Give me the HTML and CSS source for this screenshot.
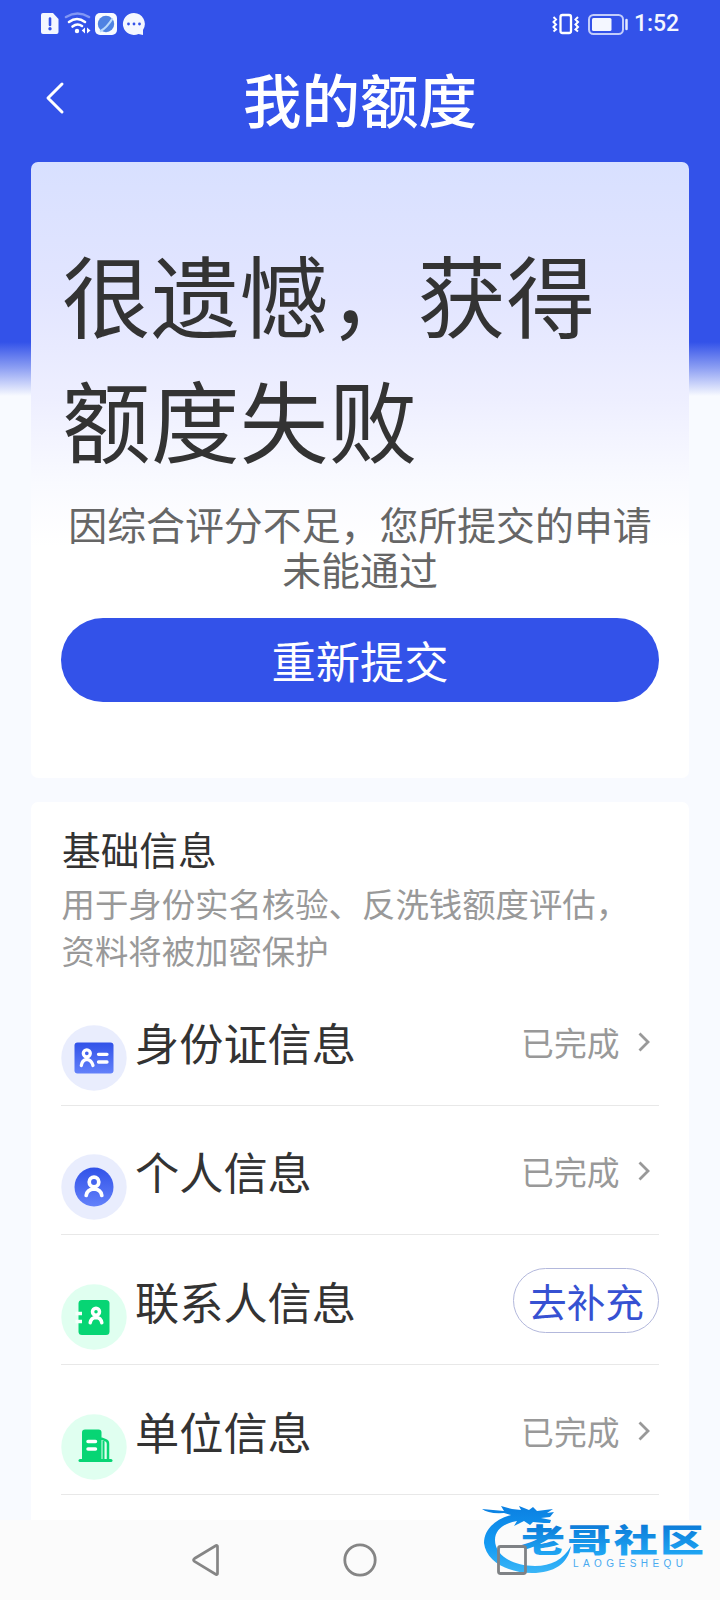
FILE: index.html
```html
<!DOCTYPE html>
<html lang="zh-CN">
<head>
<meta charset="utf-8">
<title>我的额度</title>
<link rel="stylesheet" href="styles.css">
</head>
<body>
<div class="screen">
  <div class="status">
    <svg class="status-left" width="110" height="26" viewBox="38 11 110 26">
      <path d="M44 13h9l5.500 6v13a2 2 0 0 1-2 2H43a2 2 0 0 1-2-2V15a2 2 0 0 1 2-2z" fill="#f4f7ff"/>
      <path d="M50 18.500v6.500" stroke="#3352e9" stroke-width="2.600" stroke-linecap="round"/>
      <circle cx="50" cy="28.800" r="1.700" fill="#3352e9"/>
      <path d="M66 17q11.500-7 23 0" fill="none" stroke="#8196f4" stroke-width="2.500" stroke-linecap="round"/>
      <path d="M69 22q8-6 16 0M72.500 26.500q4.800-3.800 9.500-.500" fill="none" stroke="#fff" stroke-width="2.600" stroke-linecap="round"/>
      <circle cx="77" cy="31" r="2.200" fill="#fff"/>
      <path d="M85 27.500v6l-3.300-3zM87 27.500v6l3.500-3z" fill="#fff"/>
      <rect x="95" y="13" width="22" height="22" rx="5" fill="#f8fbff"/>
      <circle cx="106" cy="24" r="8.200" fill="#4f83e2"/>
      <path d="M100 31.500q7-4 12.500-13" fill="none" stroke="#b8dafc" stroke-width="2.200"/>
      <path d="M134 13a11 11 0 1 0 4.500 21l4.500 1v-5A11 11 0 0 0 134 13z" fill="#f4f7ff"/>
      <circle cx="128.500" cy="24" r="1.400" fill="#3352e9"/><circle cx="134" cy="24" r="1.400" fill="#3352e9"/><circle cx="139.500" cy="24" r="1.400" fill="#3352e9"/>
    </svg>
    <svg class="status-right" width="78" height="26" viewBox="551 11 78 26">
      <rect x="560.500" y="15" width="10.500" height="18" rx="2" fill="none" stroke="#fff" stroke-width="2.300"/>
      <path d="M553.500 17l2.500 2.500-2.500 2.500 2.500 2.500-2.500 2.500 2.500 2.500-2.500 2M578 17l-2.500 2.500 2.500 2.500-2.500 2.500 2.500 2.500-2.500 2.500 2.500 2" fill="none" stroke="#fff" stroke-width="2"/>
      <rect x="589" y="15" width="34" height="19" rx="4.500" fill="none" stroke="#c3cdfb" stroke-width="2"/>
      <rect x="592" y="18" width="19.500" height="13" rx="1.500" fill="#f4f7ff"/>
      <path d="M626.500 20v9" stroke="#e4e9ff" stroke-width="2.500" stroke-linecap="round"/>
    </svg>
    <span class="clock">1:52</span>
  </div>
  <header class="titlebar">
    <svg class="back" width="20" height="34" viewBox="0 0 20 34"><path d="M17 3L3 17l14 14" fill="none" stroke="#fff" stroke-width="3" stroke-linecap="round" stroke-linejoin="round"/></svg>
    <h1 class="title">我的额度</h1>
  </header>

  <main class="content">
    <section class="card result">
      <h2 class="headline">很遗憾，获得<br>额度失败</h2>
      <p class="reason">因综合评分不足，您所提交的申请<br>未能通过</p>
      <button class="submit">重新提交</button>
    </section>

    <section class="card info">
      <h3 class="info-title">基础信息</h3>
      <p class="info-note">用于身份实名核验、反洗钱额度评估，<br>资料将被加密保护</p>
      <ul class="list">
        <li class="row">
          <svg class="icon" viewBox="0 0 66 66">
            <defs><linearGradient id="blue" x1="0" y1="0" x2="0" y2="1"><stop offset="0" stop-color="#3152e8"/><stop offset="1" stop-color="#6381fa"/></linearGradient></defs>
            <circle cx="33" cy="33" r="32.700" fill="#e9edfd"/>
            <rect x="13.500" y="17.500" width="39" height="31" rx="3" fill="url(#blue)"/>
            <g fill="none" stroke="#fff" stroke-width="3.300" stroke-linecap="round"><circle cx="25.800" cy="28.300" r="3.500"/><path d="M20.300 40.500Q21 35 25.800 34.300Q30.600 35 32 40.500M37.500 29.300h8.500M37.500 37h8.500"/></g>
          </svg>
          <span class="label">身份证信息</span><span class="state">已完成</span>
          <svg class="chev" viewBox="0 0 12 20"><path d="M1.500 1.500L10 10l-8.500 8.500" fill="none" stroke="#999" stroke-width="2.800"/></svg>
        </li>
        <li class="row">
          <svg class="icon" viewBox="0 0 66 66">
            <circle cx="33" cy="33" r="32.700" fill="#e9edfd"/><circle cx="33" cy="33" r="19.500" fill="url(#blue)"/>
            <g fill="none" stroke="#fff" stroke-width="3.700" stroke-linecap="round"><circle cx="33" cy="28" r="4.800"/><path d="M25.200 41.500Q26 35.300 33 34.800Q40 35.300 40.800 41.500"/></g>
          </svg>
          <span class="label">个人信息</span><span class="state">已完成</span>
          <svg class="chev" viewBox="0 0 12 20"><path d="M1.500 1.500L10 10l-8.500 8.500" fill="none" stroke="#999" stroke-width="2.800"/></svg>
        </li>
        <li class="row">
          <svg class="icon" viewBox="0 0 66 66">
            <circle cx="33" cy="33" r="32.700" fill="#e0fff0"/><rect x="17.500" y="16" width="31" height="35" rx="3.500" fill="#07d574"/>
            <g fill="none" stroke="#fff" stroke-width="3.500" stroke-linecap="round"><circle cx="35" cy="27.800" r="3.500"/><path d="M29.200 38.800Q30 33.600 35 33.400Q40 33.600 40.800 38.800"/></g>
            <path d="M14.500 29.500h6.500M14.500 37.500h6.500" stroke="#f5fffa" stroke-width="3.400"/>
          </svg>
          <span class="label">联系人信息</span><button class="fill">去补充</button>
        </li>
        <li class="row">
          <svg class="icon" viewBox="0 0 66 66">
            <circle cx="33" cy="33" r="32.700" fill="#e0fff0"/>
            <path d="M21 46V18.500a3 3 0 0 1 3-3h13.500a3 3 0 0 1 3 3v27.500z" fill="#07d574"/>
            <path d="M40 24.500l4.500 1.700q2.500 1 2.500 3.500v17" fill="none" stroke="#07d574" stroke-width="2.500"/>
            <path d="M42.500 27v19" stroke="#07d574" stroke-width="2"/>
            <path d="M19 46.500h31" stroke="#07d574" stroke-width="3" stroke-linecap="round"/>
            <path d="M27 27.500h7.500M27 35h7.500" stroke="#fff" stroke-width="3.500" stroke-linecap="round"/>
          </svg>
          <span class="label">单位信息</span><span class="state">已完成</span>
          <svg class="chev" viewBox="0 0 12 20"><path d="M1.500 1.500L10 10l-8.500 8.500" fill="none" stroke="#999" stroke-width="2.800"/></svg>
        </li>
      </ul>
    </section>
  </main>

  <nav class="navbar">
    <svg viewBox="0 0 32 36"><path d="M2.500 16.500L24 3.500q1.500-.500 1.500 1v27q0 1.500-1.500 1L2.500 19.500q-2-1.500 0-3z" fill="none" stroke="#858585" stroke-width="2.700"/></svg>
    <svg viewBox="0 0 32 36"><circle cx="16" cy="18" r="15.200" fill="none" stroke="#858585" stroke-width="2.800"/></svg>
    <svg viewBox="0 0 32 36"></svg>
  </nav>

  <svg class="watermark" width="240" height="80" viewBox="480 1500 240 80">
    <defs>
      <linearGradient id="ring" x1="0" y1="0" x2="0" y2="1"><stop offset="0" stop-color="#0b80e2"/><stop offset=".6" stop-color="#149bf3"/><stop offset="1" stop-color="#3ab6f7"/></linearGradient>
      <linearGradient id="word" x1="0" y1="0" x2="0" y2="1"><stop offset=".15" stop-color="#0a78d6"/><stop offset="1" stop-color="#24aff9"/></linearGradient>
    </defs>
    <path d="M511 1515C493 1520 484 1531 484 1543C486 1562 509 1573 532 1573C554 1573 568 1564 571 1546C563 1560 551 1566 535 1566C512 1566 495 1555 495 1540C495 1529 505 1523 517 1521L514 1526L524 1521L530 1525L533 1522L544 1523L550 1523L551 1520L541 1518L550 1517L554 1512L547 1513L553 1509L537 1511L533 1507L529 1510L519 1506L521 1510L512 1509L501 1506L504 1511L482 1509Q488 1514 504 1513Z" fill="url(#ring)"/>
    <g transform="translate(521 1552) scale(1 .72)"><text class="wm-name" textLength="183" lengthAdjust="spacing" fill="url(#word)">老哥社区</text></g>
    <text class="wm-latin" x="573" y="1566.500" textLength="110" fill="#48aaf0">LAOGESHEQU</text>
    <rect x="498.500" y="1546.500" width="27" height="27" rx="2" fill="none" stroke="#7f8285" stroke-width="2.800"/>
  </svg>
</div>
</body>
</html>
```
FILE: styles.css
```css
* { box-sizing: border-box; margin: 0; padding: 0; }
body { font-family: "Noto Sans CJK SC", sans-serif; color: #333; }
button { font-family: inherit; }
.screen {
  position: relative;
  width: 720px;
  height: 1600px;
  overflow: hidden;
  display: flex;
  flex-direction: column;
  background: linear-gradient(to bottom, #3352e9 0, #3352e9 342px, #8d9ff3 368px, #f8faff 396px);
}
.status { display: flex; height: 48px; flex: none; align-items: center; padding-left: 38px; }
.status-right { margin-left: 403px; }
.clock { margin-left: 5px; font: 500 23px/50px Roboto, sans-serif; color: #f4f7ff; letter-spacing: -.1px; }
.titlebar { display: flex; height: 114px; flex: none; padding-left: 45px; }
.back { margin-top: 33px; flex: none; }
.title { width: 590px; text-align: center; font-size: 58.500px; font-weight: 500; line-height: 99px; color: #fff; }
.content { flex: 1; min-height: 0; overflow: hidden; padding: 0 31px; }
.card { border-radius: 7px; background: #fff; }
.result {
  height: 616px;
  padding: 68px 30px 0;
  background: linear-gradient(to bottom, #d8e0ff 0, #e2e5ff 130px, #eeefff 240px, #f9faff 320px, #fff 385px);
}
.headline { padding-left: 1px; font-size: 88.500px; font-weight: 400; line-height: 125px; letter-spacing: .4px; white-space: nowrap; }
.reason { margin-top: 21px; font-size: 38.900px; line-height: 45px; text-align: center; white-space: nowrap; color: #666; }
.submit {
  display: block;
  width: 598px;
  height: 84px;
  margin-top: 27px;
  border: 0;
  border-radius: 42px;
  background: #3352e9;
  color: #fff;
  font-size: 44.300px;
  line-height: 84px;
}
.info { height: 800px; margin-top: 24px; padding: 16px 30px 0; }
.info-title { padding-left: 1px; font-size: 38.700px; font-weight: 400; line-height: 60px; }
.info-note { margin-top: 2px; padding-left: .5px; font-size: 33.400px; line-height: 46.500px; white-space: nowrap; color: #999; }
.list { list-style: none; margin-top: 3px; }
.row { display: flex; height: 129.700px; border-bottom: 1px solid #e8e8e8; }
.icon { width: 66px; height: 66px; margin-top: 48.700px; flex: none; }
.label { margin: 32.500px auto 0 8px; font-size: 44.200px; line-height: 66px; white-space: nowrap; }
.state { margin-top: 32.500px; font-size: 32.800px; line-height: 66px; color: #999; }
.chev { width: 12px; height: 20px; margin: 55.500px 9px 0 18.500px; flex: none; }
.fill {
  width: 146px;
  height: 65px;
  margin-top: 33px;
  border: 1px solid #b3b8dc;
  border-radius: 33px;
  background: #fff;
  color: #3651d2;
  font-size: 38.700px;
  line-height: 59px;
}
.navbar { display: flex; flex: none; gap: 120px; justify-content: center; align-items: center; height: 80px; background: #fbfbfb; }
.navbar svg { width: 32px; height: 36px; overflow: visible; }
.watermark { position: absolute; left: 480px; top: 1500px; }
.wm-name { font-size: 44px; font-weight: 900; }
.wm-latin { font: 400 10px "Liberation Sans", sans-serif; }
```
